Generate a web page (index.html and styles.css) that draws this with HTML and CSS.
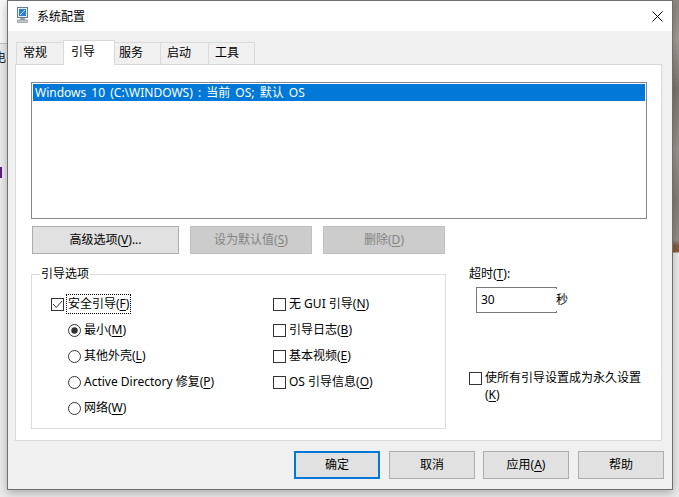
FILE: index.html
```html
<!DOCTYPE html>
<html lang="zh-CN">
<head>
<meta charset="utf-8">
<title>系统配置</title>
<link rel="stylesheet" href="styles.css">
</head>
<body>
<div class="desk">
  <div class="side-left">
    <div class="sl-top"></div>
    <div class="sl-char">电</div>
    <div class="sl-mark"></div>
  </div>
  <div class="window">
    <div class="titlebar">
      <svg class="app-icon" width="11" height="16" viewBox="0 0 11 16">
        <rect x="0.5" y="0.5" width="10" height="10" fill="#e6edf4" stroke="#6a7b8c"/>
        <rect x="2" y="2" width="7" height="7" fill="#2a7fd4"/>
        <path d="M3 8 L8 3" stroke="#cfe6ff" stroke-width="1"/>
        <path d="M3.5 11 h4 l1 2 h-6 z" fill="#9aa4ad"/>
        <rect x="0.5" y="13" width="10" height="2.5" fill="#c3cad1" stroke="#7d8791" stroke-width="0.6"/>
      </svg>
      <span class="title">系统配置</span>
      <svg class="close" width="11" height="11" viewBox="0 0 11 11">
        <path d="M0.5 0.5 L10.5 10.5 M10.5 0.5 L0.5 10.5" stroke="#000" stroke-width="1" fill="none"/>
      </svg>
    </div>
    <div class="client">
      <div class="tabs">
        <div class="tab t1">常规</div>
        <div class="tab sel">引导</div>
        <div class="tab t3">服务</div>
        <div class="tab t4">启动</div>
        <div class="tab t5">工具</div>
      </div>
      <div class="panel">
        <div class="listbox">
          <div class="list-item">Windows 10 (C:\WINDOWS) : 当前 OS; 默认 OS</div>
        </div>
        <div class="btn-row">
          <button class="btn wide">高级选项(<u>V</u>)...</button>
          <button class="btn dis">设为默认值(<u>S</u>)</button>
          <button class="btn dis">删除(<u>D</u>)</button>
        </div>
        <div class="lower">
          <div class="group">
            <div class="legend">引导选项</div>
            <div class="group-body">
              <div class="col-left">
                <div class="opt">
                  <svg width="13" height="13" viewBox="0 0 13 13"><rect x="0.5" y="0.5" width="12" height="12" fill="#fff" stroke="#333"/><path d="M2 6 L5.3 9.5 L11 3" fill="none" stroke="#333" stroke-width="1"/></svg>
                  <span class="focus">安全引导(<u>F</u>)</span>
                </div>
                <div class="opt ind">
                  <svg width="13" height="13" viewBox="0 0 13 13"><circle cx="6.5" cy="6.5" r="6" fill="#fff" stroke="#333"/><circle cx="6.5" cy="6.5" r="3.2" fill="#333"/></svg>
                  <span class="lbl">最小(<u>M</u>)</span>
                </div>
                <div class="opt ind">
                  <svg width="13" height="13" viewBox="0 0 13 13"><circle cx="6.5" cy="6.5" r="6" fill="#fff" stroke="#333"/></svg>
                  <span class="lbl">其他外壳(<u>L</u>)</span>
                </div>
                <div class="opt ind">
                  <svg width="13" height="13" viewBox="0 0 13 13"><circle cx="6.5" cy="6.5" r="6" fill="#fff" stroke="#333"/></svg>
                  <span class="lbl">Active Directory 修复(<u>P</u>)</span>
                </div>
                <div class="opt ind">
                  <svg width="13" height="13" viewBox="0 0 13 13"><circle cx="6.5" cy="6.5" r="6" fill="#fff" stroke="#333"/></svg>
                  <span class="lbl">网络(<u>W</u>)</span>
                </div>
              </div>
              <div class="col-right">
                <div class="opt">
                  <svg width="13" height="13" viewBox="0 0 13 13"><rect x="0.5" y="0.5" width="12" height="12" fill="#fff" stroke="#333"/></svg>
                  <span class="lbl">无 GUI 引导(<u>N</u>)</span>
                </div>
                <div class="opt">
                  <svg width="13" height="13" viewBox="0 0 13 13"><rect x="0.5" y="0.5" width="12" height="12" fill="#fff" stroke="#333"/></svg>
                  <span class="lbl">引导日志(<u>B</u>)</span>
                </div>
                <div class="opt">
                  <svg width="13" height="13" viewBox="0 0 13 13"><rect x="0.5" y="0.5" width="12" height="12" fill="#fff" stroke="#333"/></svg>
                  <span class="lbl">基本视频(<u>E</u>)</span>
                </div>
                <div class="opt">
                  <svg width="13" height="13" viewBox="0 0 13 13"><rect x="0.5" y="0.5" width="12" height="12" fill="#fff" stroke="#333"/></svg>
                  <span class="lbl">OS 引导信息(<u>O</u>)</span>
                </div>
              </div>
            </div>
          </div>
          <div class="side">
            <div class="to-label">超时(<u>T</u>):</div>
            <div class="to-row">
              <div class="textbox">30</div>
              <span class="unit">秒</span>
            </div>
            <div class="perm">
              <svg width="13" height="13" viewBox="0 0 13 13"><rect x="0.5" y="0.5" width="12" height="12" fill="#fff" stroke="#333"/></svg>
              <span class="perm-text">使所有引导设置成为永久设置<br>(<u>K</u>)</span>
            </div>
          </div>
        </div>
      </div>
      <div class="footer">
        <button class="btn fbtn ok">确定</button>
        <button class="btn fbtn cancel">取消</button>
        <button class="btn fbtn">应用(<u>A</u>)</button>
        <button class="btn fbtn">帮助</button>
      </div>
    </div>
  </div>
  <div class="side-right"></div>
  <div class="bottom"></div>
</div>
</body>
</html>
```
FILE: styles.css
```css
* { box-sizing: border-box; }
html, body { margin: 0; padding: 0; }
body {
  width: 679px;
  height: 497px;
  overflow: hidden;
  background: #ebebeb;
  font-family: "Noto Sans", "Noto Sans CJK SC", sans-serif;
  font-size: 12px;
  color: #000;
}
u { text-decoration: underline; text-underline-offset: 2px; }

.desk {
  display: grid;
  grid-template-columns: 7px 666px 6px;
  grid-template-rows: 490px 7px;
  width: 679px;
  height: 497px;
}

/* desktop around the dialog */
.side-left {
  background: #ececec;
  overflow: hidden;
  display: flex;
  flex-direction: column;
}
.sl-top { flex: none; height: 44px; background: #f9f9f9; border-bottom: 1px solid #c4c4c4; }
.sl-char {
  flex: none;
  margin: 6px 0 0 -6px;
  line-height: 14px;
  color: #222;
  white-space: nowrap;
  font-family: "Noto Sans CJK SC", sans-serif;
}
.sl-mark { flex: none; width: 2px; height: 11px; background: #5b1d7a; margin-top: 103px; }

.side-right {
  background: linear-gradient(to bottom,
    #8e8882 0px, #a39d96 40px, #7c766f 90px, #9a948d 150px, #857f78 200px,
    #958f88 240px, #8b5a3a 246px, #8b5a3a 252px, #ececec 253px, #ececec 100%);
}
.bottom { grid-column: 1 / 4; }

/* window */
.window {
  position: relative;
  z-index: 1;
  border: 1px solid #6f6f6f;
  background: #f0f0f0;
  display: flex;
  flex-direction: column;
  box-shadow: 0 3px 9px rgba(0, 0, 0, 0.28);
}
.titlebar {
  flex: none;
  height: 30px;
  background: #fff;
  display: flex;
  align-items: center;
  padding: 0 9px;
}
.app-icon { align-self: flex-start; margin-top: 6px; flex: none; }
.title { margin-left: 9px; line-height: 16px; font-family: "Noto Sans CJK SC", sans-serif; }
.close { margin-left: auto; flex: none; }

.client {
  flex: 1;
  display: flex;
  flex-direction: column;
  padding: 9px 0 0 7px;
}

/* tabs */
.tabs {
  flex: none;
  display: flex;
  align-items: flex-end;
  height: 24px;
  padding-left: 1px;
}
.tab {
  flex: none;
  height: 22px;
  border: 1px solid #d9d9d9;
  border-width: 1px 0 0 1px;
  background: #f0f0f0;
  padding-left: 6px;
  line-height: 20px;
  white-space: nowrap;
}
.t1 { width: 49px; }
.tab.sel {
  position: relative;
  z-index: 2;
  width: 52px;
  height: 25px;
  margin: 0 -2px -1px -2px;
  background: #fff;
  border-width: 1px 1px 0 1px;
  padding-left: 7px;
  line-height: 21px;
}
.t3 { width: 47px; padding-left: 5px; }
.t4 { width: 48px; }
.t5 { width: 47px; border-right-width: 1px; }

/* panel */
.panel {
  flex: none;
  width: 647px;
  height: 377px;
  border: 1px solid #d9d9d9;
  background: #fff;
  padding: 17px 0 0 15px;
}
.listbox {
  width: 616px;
  height: 137px;
  border: 1px solid #828790;
  padding: 1px;
}
.list-item {
  height: 17px;
  line-height: 17px;
  padding-left: 2px;
  background: #0078d7;
  color: #fff;
  white-space: nowrap;
  word-spacing: 2px;
}

.btn-row { display: flex; gap: 11px; margin: 7px 0 0 1px; }
.btn {
  height: 28px;
  border: 1px solid #adadad;
  background: #e1e1e1;
  font: inherit;
  color: #000;
  padding: 0;
  line-height: 26px;
  white-space: nowrap;
}
.wide { width: 147px; }
.dis { width: 122px; background: #cccccc; border-color: #bfbfbf; color: #838383; }

.lower { display: flex; margin-top: 12px; }
.group {
  flex: none;
  width: 415px;
  height: 155px;
  border: 1px solid #dcdcdc;
  margin-top: 8px;
}
.legend {
  margin: -9px 0 0 8px;
  background: #fff;
  padding: 0 1px;
  line-height: 16px;
  width: max-content;
}
.group-body { display: flex; margin-top: 9px; padding-left: 19px; }
.col-left { width: 222px; flex: none; }
.opt { display: flex; align-items: center; height: 26px; white-space: nowrap; }
.opt svg { flex: none; }
.opt.ind { padding-left: 17px; }
.focus { margin-left: 2px; border: 1px dotted #000; padding: 0 1px; line-height: 18px; }
.lbl { margin-left: 3px; line-height: 16px; }

.side { margin-left: 23px; }
.to-label { line-height: 16px; }
.to-row { display: flex; align-items: center; margin: 5px 0 0 7px; }
.textbox {
  width: 81px;
  height: 26px;
  border: 1px solid #7a7a7a;
  padding-left: 4px;
  line-height: 24px;
}
.unit { margin-left: -1px; background: #fff; line-height: 22px; }
.perm { display: flex; align-items: flex-start; margin-top: 56px; }
.perm svg { flex: none; margin-top: 3px; }
.perm-text { margin-left: 3px; line-height: 17px; white-space: nowrap; }

/* footer buttons */
.footer {
  flex: none;
  display: flex;
  justify-content: flex-end;
  gap: 9px;
  margin-top: 10px;
  padding-right: 8px;
}
.fbtn { width: 86px; }
.ok { border: 2px solid #0078d7; line-height: 24px; }
.cancel { margin-right: -1px; }
```
